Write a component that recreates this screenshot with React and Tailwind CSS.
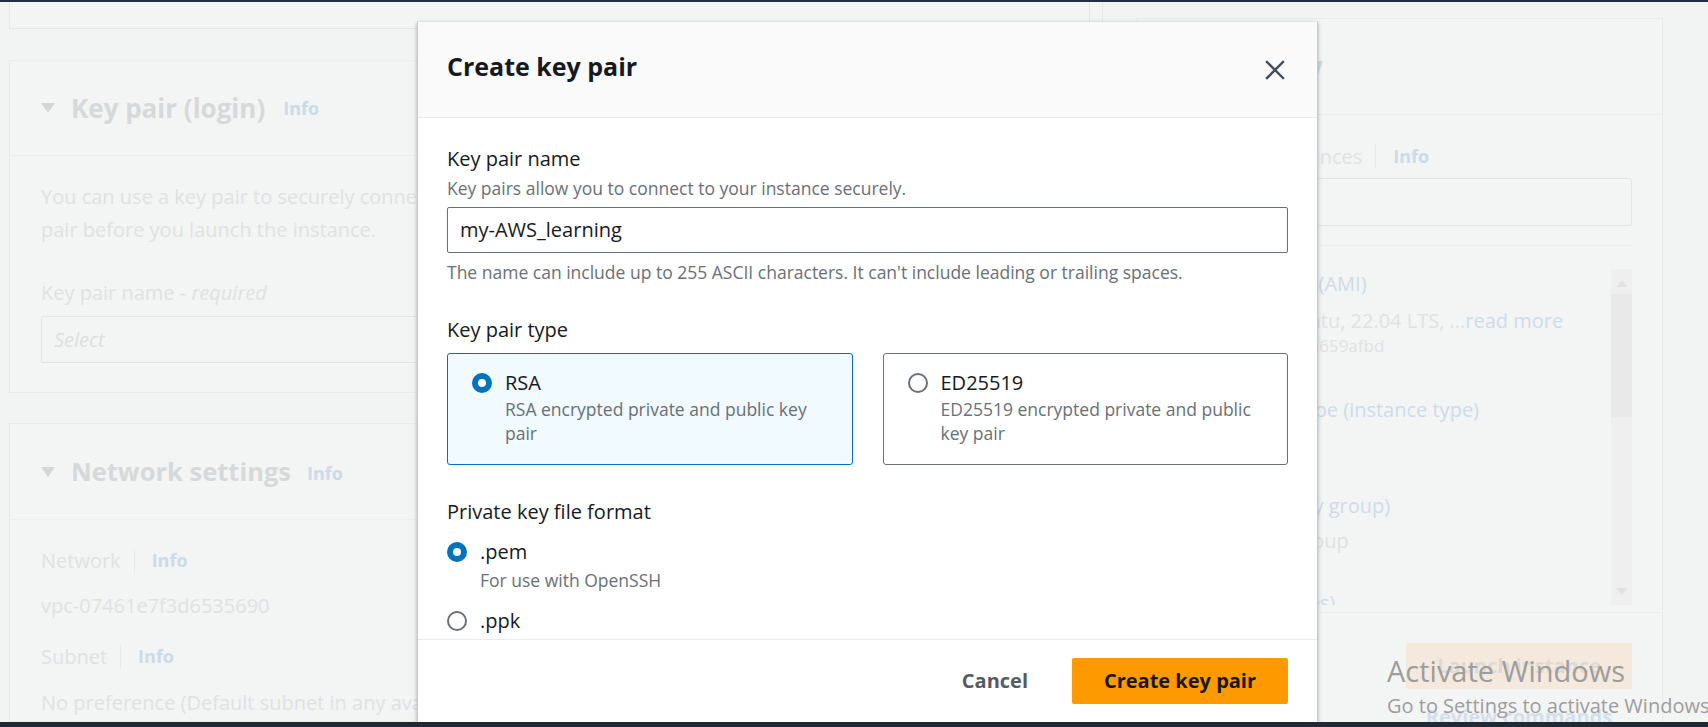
import React from "react";

function Tri({ className = "" }) {
  return (
    <svg width="14" height="10" viewBox="0 0 14 10" className={className}>
      <polygon points="0,0 14,0 7,10" fill="#d3d7d7" />
    </svg>
  );
}

function InfoLink({ className = "" }) {
  return <span className={"font-bold text-[18px] text-[#cadbea] " + className}>Info</span>;
}

function Radio({ checked }) {
  return checked ? (
    <span className="block w-[20px] h-[20px] rounded-full border-[6px] border-[#0073bb] bg-white shrink-0" />
  ) : (
    <span className="block w-[20px] h-[20px] rounded-full border-[2px] border-[#687078] bg-white shrink-0" />
  );
}

export default function App() {
  return (
    <div className="relative w-[1708px] h-[727px] overflow-hidden bg-[#f2f3f3] font-['Open_Sans','Noto_Sans',sans-serif] flex flex-col">
      <div className="h-[2px] bg-[#232f3e] shrink-0" />
      <div className="flex-1 flex min-h-0">
        {/* left column */}
        <div className="w-[1103px] shrink-0 border-r border-[#e7e9e9] pl-[9px] pr-[12px] flex flex-col overflow-hidden">
          <div className="h-[27px] shrink-0 border-b border-x border-[#e6e8e8] bg-[#f3f4f4]" />
          <div className="mt-[31px] h-[333px] shrink-0 border border-[#e9ebeb] bg-[#f3f4f4] flex flex-col">
            <div className="h-[95px] border-b border-[#eceeee] flex items-center pl-[31px] gap-[16px]">
              <Tri />
              <span className="text-[26px] font-bold text-[#d6d9d9]">Key pair (login)</span>
              <InfoLink className="ml-[2px]" />
            </div>
            <div className="pl-[31px] pt-[24px] text-[20px] leading-[33px] text-[#dfe2e2] whitespace-nowrap">
              <div>You can use a key pair to securely connect to your instance. Ensure that you have access to the selected key</div>
              <div>pair before you launch the instance.</div>
              <div className="mt-[30px]">
                Key pair name - <i>required</i>
              </div>
              <div className="mt-[7px] h-[47px] w-[900px] border border-[#e2e5e5] rounded-[2px] flex items-center pl-[12px] italic text-[#dcdfdf]">
                Select
              </div>
            </div>
          </div>
          <div className="mt-[30px] flex-1 border border-[#e9ebeb] bg-[#f3f4f4] flex flex-col">
            <div className="h-[96px] border-b border-[#eceeee] flex items-center pl-[31px] gap-[16px] shrink-0">
              <Tri />
              <span className="text-[25.5px] font-bold text-[#d6d9d9]">Network settings</span>
              <InfoLink className="mt-[4px]" />
            </div>
            <div className="pl-[31px] pt-[24px] text-[20px] leading-[33px] text-[#dfe2e2] whitespace-nowrap">
              <div className="flex items-center">
                <span>Network</span>
                <span className="mx-[13px] w-px h-[24px] bg-[#e8eaea]" />
                <InfoLink className="ml-[4px]" />
              </div>
              <div className="mt-[12px]">vpc-07461e7f3d6535690</div>
              <div className="mt-[18px] flex items-center">
                <span>Subnet</span>
                <span className="mx-[13px] w-px h-[24px] bg-[#e8eaea]" />
                <InfoLink className="ml-[4px]" />
              </div>
              <div className="mt-[13px]">No preference (Default subnet in any availability zone)</div>
            </div>
          </div>
        </div>
        {/* right column: summary */}
        <div className="flex-1 pl-[33px] pt-[16px] flex flex-col">
          <div className="w-[527px] flex-1 border border-[#e9ebeb] bg-[#f3f4f4] flex flex-col">
            <div className="h-[96px] border-b border-[#eceeee] flex items-center pl-[31px] gap-[16px] shrink-0">
              <Tri />
              <span className="text-[26px] font-bold text-[#d6d9d9]">Summary</span>
            </div>
            <div className="pl-[31px] pr-[30px] pt-[25px] flex flex-col text-[20px] leading-[33px] text-[#dfe2e2]">
              <div className="flex items-center whitespace-nowrap">
                <span>Number of instances</span>
                <span className="mx-[13px] w-px h-[24px] bg-[#e8eaea]" />
                <InfoLink className="ml-[4px]" />
              </div>
              <div className="mt-[5px] h-[48px] border border-[#e2e5e5] rounded-[2px]" />
              <div className="mt-[19px] h-px bg-[#eceeee]" />
              <div className="mt-[23px] h-[336px] flex overflow-hidden">
                <div className="flex-1 overflow-hidden whitespace-nowrap leading-[28px] pt-[1px]">
                  <div className="text-[#cddcea]">Software Image (AMI)</div>
                  <div className="mt-[9px]">
                    Canonical, Ubuntu, 22.04 LTS, ...<span className="text-[#cddcea]">read more</span>
                  </div>
                  <div className="text-[17px] leading-[24px] mt-[-1px]">ami-053b0d53c2e7659afbd</div>
                  <div className="mt-[38px] text-[#cddcea]">Virtual server type (instance type)</div>
                  <div className="mt-[7px]">t2.micro</div>
                  <div className="mt-[33px] text-[#cddcea]">Firewall (security group)</div>
                  <div className="mt-[7px]">New security group</div>
                  <div className="mt-[34px] text-[#cddcea]">Storage (volumes)</div>
                </div>
                <div className="w-[21px] bg-[#efefef] flex flex-col items-center">
                  <svg width="12" height="7" viewBox="0 0 12 7" className="mt-[11px]">
                    <polygon points="0,7 12,7 6,0" fill="#e2e2e2" />
                  </svg>
                  <div className="mt-[7px] w-[21px] h-[123px] bg-[#e9e9e9]" />
                  <div className="flex-1" />
                  <svg width="12" height="7" viewBox="0 0 12 7" className="mb-[10px]">
                    <polygon points="0,0 12,0 6,7" fill="#e2e2e2" />
                  </svg>
                </div>
              </div>
            </div>
            <div className="mt-[7px] border-t border-[#eceeee] flex-1 flex flex-col items-end pr-[30px] pt-[30px]">
              <div className="w-[226px] h-[46px] rounded-[2px] bg-[#f4e9dc] flex items-center justify-center text-[20px] font-bold text-[#dcd9d6]">
                Launch instance
              </div>
              <div className="w-[226px] mt-[14px] text-center text-[20px] font-bold text-[#d3e0ec] leading-[28px]">Review commands</div>
            </div>
          </div>
        </div>
      </div>
      <div className="h-[5px] bg-[#1f2a37] shrink-0 relative z-20" />

      {/* Modal */}
      <div className="absolute left-[417px] top-[22px] w-[901px] h-[700px] bg-white border-x border-[#c4c9c9] shadow-[0_1px_4px_rgba(0,28,36,0.3)] flex flex-col z-10">
        <div className="h-[96px] shrink-0 bg-[#fafafa] border-b border-[#eaeded] flex items-center justify-between pl-[29px] pr-[32px]">
          <span className="text-[25px] font-bold text-[#16191f] mb-[5px]">Create key pair</span>
          <svg width="20" height="20" viewBox="0 0 20 20">
            <path d="M2 2 L18 18 M18 2 L2 18" stroke="#414d5c" strokeWidth="2.4" strokeLinecap="square" />
          </svg>
        </div>
        <div className="flex-1 min-h-0 overflow-hidden pl-[29px] pr-[29px] pt-[27px] text-[#16191f]">
          <div className="text-[20px] leading-[28px]">Key pair name</div>
          <div className="mt-[3px] text-[17.5px] leading-[24px] text-[#687078]">Key pairs allow you to connect to your instance securely.</div>
          <div className="mt-[7px] h-[46px] border border-[#687078] rounded-[2px] flex items-center px-[12px] text-[20px]">my-AWS_learning</div>
          <div className="mt-[7px] text-[17.5px] leading-[24px] text-[#687078]">
            The name can include up to 255 ASCII characters. It can't include leading or trailing spaces.
          </div>
          <div className="mt-[32px] text-[20px] leading-[28px]">Key pair type</div>
          <div className="mt-[9px] grid grid-cols-2 gap-[30px]">
            <div className="h-[112px] border border-[#0073bb] bg-[#f1faff] rounded-[3px] pl-[24px] pt-[15px] flex gap-[13px]">
              <div className="mt-[4px]">
                <Radio checked />
              </div>
              <div>
                <div className="text-[20px] leading-[28px]">RSA</div>
                <div className="text-[17.5px] leading-[24px] text-[#687078]">
                  RSA encrypted private and public key
                  <br />
                  pair
                </div>
              </div>
            </div>
            <div className="h-[112px] border border-[#687078] rounded-[3px] pl-[24px] pt-[15px] flex gap-[13px]">
              <div className="mt-[4px]">
                <Radio />
              </div>
              <div>
                <div className="text-[20px] leading-[28px]">ED25519</div>
                <div className="text-[17.5px] leading-[24px] text-[#687078]">
                  ED25519 encrypted private and public
                  <br />
                  key pair
                </div>
              </div>
            </div>
          </div>
          <div className="mt-[33px] text-[20px] leading-[28px]">Private key file format</div>
          <div className="mt-[12px] flex gap-[13px]">
            <div className="mt-[4px]">
              <Radio checked />
            </div>
            <div>
              <div className="text-[20px] leading-[28px]">.pem</div>
              <div className="mt-[2px] text-[17.5px] leading-[24px] text-[#687078]">For use with OpenSSH</div>
            </div>
          </div>
          <div className="mt-[15px] flex gap-[13px]">
            <div className="mt-[4px]">
              <Radio />
            </div>
            <div className="text-[20px] leading-[28px]">.ppk</div>
          </div>
        </div>
        <div className="h-[83px] shrink-0 border-t border-[#eaeded] flex items-start justify-end pt-[18px] pr-[29px]">
          <div className="h-[46px] flex items-center mr-[44px] text-[20px] font-bold text-[#545b64]">Cancel</div>
          <div className="w-[216px] h-[46px] rounded-[2px] bg-[#ff9900] flex items-center justify-center text-[20px] font-bold text-[#16191f]">
            Create key pair
          </div>
        </div>
      </div>

      {/* Windows watermark */}
      <div className="absolute left-[1387px] top-[653px] z-10 whitespace-nowrap text-[#9d9d9d] font-['Open_Sans',sans-serif]">
        <div className="text-[29px] leading-[36px]">Activate Windows</div>
        <div className="mt-[4px] text-[20px] leading-[26px]">Go to Settings to activate Windows.</div>
      </div>
    </div>
  );
}
